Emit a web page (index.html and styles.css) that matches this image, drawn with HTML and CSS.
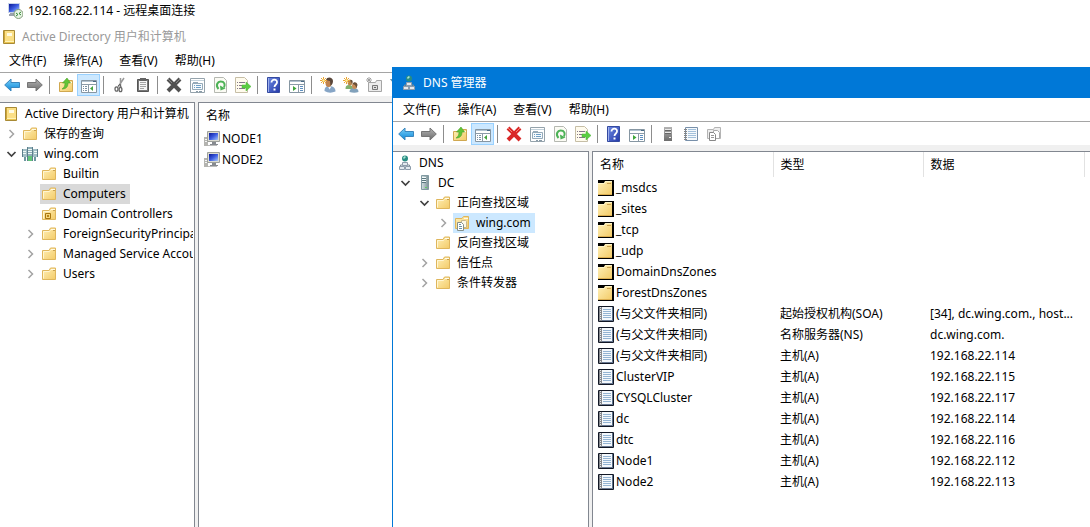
FILE: index.html
```html
<!DOCTYPE html>
<html lang="zh-CN">
<head>
<meta charset="utf-8">
<title>192.168.22.114 - 远程桌面连接</title>
<link rel="stylesheet" href="styles.css">
</head>
<body>
<svg class="defs" aria-hidden="true">
  <defs>
    <linearGradient id="g-folder" x1="0" y1="0" x2="1" y2="1"><stop offset="0" stop-color="#fff0b8"/><stop offset="1" stop-color="#f3cb68"/></linearGradient>
    <linearGradient id="g-blue" x1="0" y1="0" x2="0" y2="1"><stop offset="0" stop-color="#7cd0f8"/><stop offset="1" stop-color="#0a86d8"/></linearGradient>
    <linearGradient id="g-gray" x1="0" y1="0" x2="0" y2="1"><stop offset="0" stop-color="#b4b4b4"/><stop offset="1" stop-color="#6c6c6c"/></linearGradient>
    <linearGradient id="g-help" x1="0" y1="0" x2="1" y2="1"><stop offset="0" stop-color="#6f8ce4"/><stop offset="1" stop-color="#2438a8"/></linearGradient>
    <linearGradient id="g-screen" x1="0" y1="0" x2="1" y2="1"><stop offset="0" stop-color="#0a1896"/><stop offset=".5" stop-color="#3c5ce0"/><stop offset="1" stop-color="#a8c8fa"/></linearGradient>
    <linearGradient id="g-server" x1="0" y1="0" x2="1" y2="0"><stop offset="0" stop-color="#d5e2e4"/><stop offset="1" stop-color="#7b9096"/></linearGradient>
  </defs>
  <symbol id="i-folder" viewBox="0 0 16 16"><path d="M1.500 4.500h6.500l1.500-2.500h5v11.500h-13z" fill="url(#g-folder)" stroke="#dfb65c"/><path d="M10 3.500h4" stroke="#fffbe8"/><path d="M12 4.500h2" stroke="#c9a050"/><path d="M2.500 12.500v-7H8.500l1-1" fill="none" stroke="#fff6d2"/></symbol>
  <symbol id="i-folder-ou" viewBox="0 0 16 16"><use href="#i-folder"/><path d="M4.500 7.500h5v5h-5z" fill="#f6d67c" stroke="#a87610"/><path d="M6 9h2v2H6z" fill="#b98516"/></symbol>
  <symbol id="i-zone" viewBox="0 0 16 16"><path d="M1.500 3.500h6.500l1.500-2h5v12h-13z" fill="url(#g-folder)" stroke="#dfb65c"/><path d="M10 3.500h4" stroke="#fffbe8"/><path d="M7.500 5.500h4l1 1v6h-5z" fill="#fdf8e6" stroke="#c9b88c"/><path d="M3.500 7.500h4l2 2v6h-6z" fill="#fff" stroke="#84908c"/><path d="M5 9.500h2m-2 2h3m-3 2h3" stroke="#6d94a8"/></symbol>
  <symbol id="i-folder-sel" viewBox="0 0 16 16"><path d="M0 0h16v16H0z" fill="#000"/><path d="M0 3h6l1-2h7v13.500H0z" fill="url(#g-folder)"/><path d="M0 3.500h6.500l1-2H14" fill="none" stroke="#fff5c8"/><path d="M9 3.500h4" stroke="#c9a050"/><path d="M0 14.500h14" stroke="#dcae50"/></symbol>
  <symbol id="i-record" viewBox="0 0 16 16"><path d="M.5.500h15v15H.5z" fill="#f4f8fc" stroke="#111725"/><path d="M1 1h3v14H1z" fill="#84878c"/><path d="M2.500 1v14" stroke="#e7e9ed" stroke-dasharray="1 1"/><path d="M5 3.500h8m-8 2h8m-8 2h8m-8 2h8m-8 2h8" stroke="#94b4d3"/><path d="M14.500 1v14" stroke="#5c718c"/><path d="M4 14.500h11" stroke="#687892"/></symbol>
  <symbol id="i-book" viewBox="0 0 16 16"><path d="M2.500 1.500h11v13h-11z" fill="#eac451" stroke="#a88a35"/><path d="M4 2h9v10H4z" fill="#fbdf85"/><path d="M6 4h5v3H6z" fill="#fffbe4"/><path d="M3 12.500h10" stroke="#fff3b6"/><path d="M3.500 2v11" stroke="#cda539"/></symbol>
  <symbol id="i-domain" viewBox="0 0 16 16"><path d="M5 1h6v14H5z" fill="#8faeb8"/><path d="M0 3h5v8H0zM11 3h5v8h-5z" fill="#a2bec5"/><path d="M6 3.500h4m-4 2h4m-4 2h4M1 5.500h3m-3 2h3M12 5.500h3m-3 2h3" stroke="#eef9f6"/><path d="M5.500 1v14m5-14v14M.5 3v8m15-8v8" stroke="#5c7f8c"/><path d="M6 10h4v5H6z" fill="#62c479"/><path d="M2 11h2v4H2zM12 11h2v4h-2z" fill="#6d98a0"/></symbol>
  <symbol id="i-pc" viewBox="0 0 16 16"><path d="M0 6h4v9H0z" fill="#b4b4b0"/><path d="M1 8.500h2m-2 2h2" stroke="#f6f6f6"/><path d="M3.500.500h12v10h-12z" fill="#dcdcd2" stroke="#9ea19c"/><path d="M5 2h9v7H5z" fill="url(#g-screen)"/><path d="M8 11h4v2h2v1H6v-1h2z" fill="#878b90"/><path d="M4 14.500h9" stroke="#bcbdbc"/></symbol>
  <symbol id="i-rdp" viewBox="0 0 16 16"><path d="M1 0h12v10H1z" fill="#c9d4ea"/><path d="M2 1h10v8H2z" fill="url(#g-screen)"/><path d="M3 10h5v1H3zM2 11h6v2H2z" fill="#9ba3ae"/><circle cx="11.500" cy="11" r="4.500" fill="#e7f3e4" stroke="#809c79"/><path d="m9 10 2 1.500L9 13m5-4-2 1.500 2 1.500" fill="none" stroke="#338a35"/></symbol>
  <symbol id="i-dns" viewBox="0 0 16 16"><circle cx="8" cy="3.500" r="3" fill="#288d83"/><path d="M6 3c1-2 2-2 3-1L7 4z" fill="#a8e3d2"/><path d="M8 7v3M3.500 12v-2h9v2" fill="none" stroke="#7c8b94"/><path d="M5.500 7.500h5v3h-5zM2.500 11.500h5v3h-5zM8.500 11.500h5v3h-5z" fill="#e2e9ee" stroke="#8d9cab"/></symbol>
  <symbol id="i-server" viewBox="0 0 16 16"><path d="M5.500.500h7v14h-7z" fill="url(#g-server)" stroke="#819aa2"/><path d="M6 3.500h4m-4 2h4m-4 2h4" stroke="#5a767e"/><path d="M6 2.500h4m-4 2h4m-4 2h4" stroke="#f2fafa"/><path d="M9 12h2v1H9z" fill="#61d063"/></symbol>
  <symbol id="i-server-gray" viewBox="0 0 16 16"><path d="M4 1h8v14H4z" fill="url(#g-gray)"/><path d="M5 3.500h6m-6 3h6" stroke="#e9e9e9"/><path d="M5 4.500h6m-6 3h6" stroke="#666"/><path d="M9 11h2v1H9z" fill="#eee"/></symbol>
  <symbol id="i-back" viewBox="0 0 16 16"><path d="M.7 8 7 2v3.500h8.500v5H7V14z" fill="url(#g-blue)" stroke="#3a86bd"/></symbol>
  <symbol id="i-forward" viewBox="0 0 16 16"><path d="M15.300 8 9 2v3.500H.5v5H9V14z" fill="url(#g-gray)" stroke="#757575"/></symbol>
  <symbol id="i-up" viewBox="0 0 16 16"><path d="M1.500 5.500h6l1.500-2h5.500v11h-13z" fill="url(#g-folder)" stroke="#d0a850"/><path d="M10 5.500h4" stroke="#fffbe8"/><path d="M4 12c2-1 3-3 3-6H4.500L9 1l3.500 5H10c0 4-2 6-6 6z" fill="#62c436" stroke="#4ba32b" stroke-width=".6"/></symbol>
  <symbol id="i-tree" viewBox="0 0 16 16"><path d="M.5 3.500h15v12H.5z" fill="#fff" stroke="#8696a2"/><path d="M1 4.500h14" stroke="#b2c3d1"/><path d="M12 4.500h3" stroke="#486a86"/><path d="M1 7.500h14M7.500 8v7" stroke="#8b9ba8"/><path d="M2 9.500h1m1 0h2m-4 2h1m1 0h2m-4 2h1m1 0h2" stroke="#7b91a4"/><path d="m9 11.500 3-2.500v5z" fill="#44a340"/></symbol>
  <symbol id="i-pane" viewBox="0 0 16 16"><path d="M.5 3.500h15v12H.5z" fill="#fff" stroke="#8696a2"/><path d="M1 4.500h14" stroke="#b2c3d1"/><path d="M12 4.500h3" stroke="#486a86"/><path d="M1 7.500h14M9.500 8v7" stroke="#8b9ba8"/><path d="M11 9.500h3m-3 2h3m-3 2h3" stroke="#5d8fc0"/><path d="M4 9l3.500 2.500L4 14z" fill="#3da53a"/></symbol>
  <symbol id="i-cut" viewBox="0 0 16 16"><path d="M12 1 6 10M8.500 1v9" fill="none" stroke="#999" stroke-width="1.500"/><path d="m6 9 2-2 1 3" fill="none" stroke="#666"/><ellipse cx="4.500" cy="12" rx="1.500" ry="2.200" fill="none" stroke="#666" stroke-width="1.300"/><ellipse cx="8.500" cy="12.500" rx="1.400" ry="2.200" fill="none" stroke="#666" stroke-width="1.300"/></symbol>
  <symbol id="i-clip" viewBox="0 0 16 16"><path d="M2.500 2.500h11v12h-11z" fill="#777" stroke="#555"/><path d="M4 4h8v9H4z" fill="#f7f7f7"/><path d="M5 1h6v3H5z" fill="#646464"/><path d="M5 5.500h6m-6 2h6m-6 2h6m-6 2h4" stroke="#a5a5a5"/></symbol>
  <symbol id="i-x-gray" viewBox="0 0 16 16"><path d="m2 2 12 12M14 2 2 14" stroke="#515151" stroke-width="4"/><path d="m2 2 4 4m8-4-4 4" stroke="#888"/></symbol>
  <symbol id="i-x-red" viewBox="0 0 16 16"><path d="m2 2 12 12M14 2 2 14" stroke="#d92727" stroke-width="4"/><path d="m2 2 4 4m8-4-4 4" stroke="#f68173"/></symbol>
  <symbol id="i-props" viewBox="0 0 16 16"><path d="M1.500 1.500h14v14h-14z" fill="#fff" stroke="#95a3ac"/><path d="M2 3.500h13" stroke="#c4d3dc"/><path d="M3.500 6.500h10v6h-10zM4 5.500h5" fill="#f6fafc" stroke="#95aab9"/><path d="M5 8.500h1m1 0h5m-7 2h1m1 0h5" stroke="#6d9fc6"/><path d="M7 14.500h2m1 0h3" stroke="#899ba8"/></symbol>
  <symbol id="i-refresh" viewBox="0 0 16 16"><path d="M2.500.500h9l3 3v12h-12z" fill="#fbfbf4" stroke="#b5b8b1"/><path d="M6.500 12C3 8 6 4.500 8.500 4.500c4 0 5 3 3.500 6" fill="none" stroke="#4db257" stroke-width="2"/><path d="m8 8.500 5.500 3-5 2z" fill="#4db257"/></symbol>
  <symbol id="i-export" viewBox="0 0 16 16"><path d="M.5.500h9l3 3v12H.5z" fill="#fffbed" stroke="#c6bea6"/><path d="M2 5.500h1m1 0h6m-8 3h1m1 0h4m-6 3h1m1 0h6" stroke="#84788a"/><path d="M7 8h4V5l5 4.500-5 4.500v-3H7z" fill="#5bce42" stroke="#48b436" stroke-width=".5"/></symbol>
  <symbol id="i-help" viewBox="0 0 16 16"><path d="M1.500.500h12v15h-12z" fill="url(#g-help)" stroke="#344aa0"/><path d="M2.500 1v14" stroke="#9eb0ed"/><path d="M5.500 5.500c0-4 6-3.500 5.500 0C11 7.500 8.500 7.500 8.500 10" fill="none" stroke="#fff" stroke-width="1.800"/><path d="M7.500 11.500h2v2h-2z" fill="#fff"/></symbol>
  <symbol id="i-spark" viewBox="0 0 16 16"><path d="M3.500 0v7M0 3.500h7M1 1l5 5M6 1 1 6" stroke="#eba535"/><circle cx="3.500" cy="3.500" r="1.200" fill="#fff3a0"/></symbol>
  <symbol id="i-user" viewBox="0 0 16 16"><path d="M4.500 14c0-4 2-5 5-5s6 1.500 6 5.500q-6 2.500-11-.5" fill="#86a5c6"/><path d="m8 9.500 1.500 3 2-3z" fill="#f4f7fb"/><ellipse cx="8.500" cy="6" rx="3" ry="4" fill="#c0834f"/><path d="M6 3C7-1 13 0 13 4c0 2-1 4-2.500 5L10 4z" fill="#59463a"/><use href="#i-spark"/></symbol>
  <symbol id="i-users" viewBox="0 0 16 16"><path d="M2.500 12c0-3 1-4 3.500-4s4 1 4 4z" fill="#81b06e"/><ellipse cx="7" cy="5.500" rx="2.300" ry="3" fill="#b6844e"/><path d="M7 3.500c3-2 3 2 2 3z" fill="#675039"/><path d="M6.500 15c0-3 2-4 4.500-4s4.500 1 4.500 4q-4 1.500-9 0" fill="#81a1bb"/><ellipse cx="11.500" cy="9" rx="2.500" ry="3" fill="#c78d57"/><path d="M9.500 7c1-3 5-2 5 1l-1 3-1.500-3z" fill="#6b5038"/><use href="#i-spark"/></symbol>
  <symbol id="i-newou" viewBox="0 0 16 16"><path d="M2.500 5.500h7l1-2h5v11h-13z" fill="#ececec" stroke="#a5a5a5"/><path d="M6.500 8.500h5v4h-5z" fill="#ddd" stroke="#777"/><path d="M8 10h2v1H8z" fill="#666"/><path d="M3 0v6M0 3h6M1 1l4 4M5 1 1 5" stroke="#a0a0a0"/></symbol>
  <symbol id="i-filter" viewBox="0 0 16 16"><path d="M1.500 2.500h13L9.500 8v6l-3-2V8z" fill="#a8c8dc" stroke="#7595aa"/></symbol>
  <symbol id="i-note" viewBox="0 0 16 16"><path d="M2.500 1.500h12v13h-12z" fill="#f5f9fc" stroke="#7890aa"/><path d="M1 3.500h3m-3 2h3m-3 2h3m-3 2h3m-3 2h3m-3 2h3" stroke="#858585"/><path d="M5 3.500h8m-8 2h8m-8 2h8m-8 2h8m-8 2h8" stroke="#a2c0db"/></symbol>
  <symbol id="i-docs" viewBox="0 0 16 16"><path d="M1.500 3.500h6l1-2h6v11h-13z" fill="#ededed" stroke="#b4b4b4"/><path d="M7.500 4.500h4l2 2v6h-6z" fill="#fff" stroke="#aaa"/><path d="M3.500 6.500h4l2 2v6h-6z" fill="#fff" stroke="#888"/><path d="M5 9.500h3m-3 2h3" stroke="#999"/></symbol>
  <symbol id="i-open" viewBox="0 0 16 16"><path d="m4 6 4 4 4-4" fill="none" stroke="#404040" stroke-width="1.700"/></symbol>
  <symbol id="i-closed" viewBox="0 0 16 16"><path d="m6 4 4 4-4 4" fill="none" stroke="#a3a3a3" stroke-width="1.500"/></symbol>
</svg>

<header class="remote-title"><svg class="icon"><use href="#i-rdp"/></svg><span>192.168.22.114 - 远程桌面连接</span></header>

<main class="desktop">
  <section class="window ad">
    <header class="title"><svg class="icon"><use href="#i-book"/></svg><span>Active Directory 用户和计算机</span></header>
    <nav class="menu"><button>文件(F)</button><button>操作(A)</button><button>查看(V)</button><button>帮助(H)</button></nav>
    <div class="toolbar">
      <button aria-label="后退"><svg class="icon"><use href="#i-back"/></svg></button>
      <button aria-label="前进"><svg class="icon"><use href="#i-forward"/></svg></button>
      <i class="sep"></i>
      <button aria-label="向上"><svg class="icon"><use href="#i-up"/></svg></button>
      <button class="on" aria-label="控制台树"><svg class="icon"><use href="#i-tree"/></svg></button>
      <i class="sep"></i>
      <button aria-label="剪切"><svg class="icon"><use href="#i-cut"/></svg></button>
      <button aria-label="粘贴"><svg class="icon"><use href="#i-clip"/></svg></button>
      <i class="sep"></i>
      <button aria-label="删除"><svg class="icon"><use href="#i-x-gray"/></svg></button>
      <button aria-label="属性"><svg class="icon"><use href="#i-props"/></svg></button>
      <button aria-label="刷新"><svg class="icon"><use href="#i-refresh"/></svg></button>
      <button aria-label="导出"><svg class="icon"><use href="#i-export"/></svg></button>
      <i class="sep"></i>
      <button aria-label="帮助"><svg class="icon"><use href="#i-help"/></svg></button>
      <button aria-label="操作窗格"><svg class="icon"><use href="#i-pane"/></svg></button>
      <i class="sep"></i>
      <button aria-label="新建用户"><svg class="icon"><use href="#i-user"/></svg></button>
      <button aria-label="新建组"><svg class="icon"><use href="#i-users"/></svg></button>
      <button aria-label="新建组织单位"><svg class="icon"><use href="#i-newou"/></svg></button>
      <button aria-label="筛选"><svg class="icon"><use href="#i-filter"/></svg></button>
    </div>
    <div class="panes">
      <ul class="tree">
        <li class="l0"><span class="node"><svg class="icon"><use href="#i-book"/></svg>Active Directory 用户和计算机</span></li>
        <li class="l1"><svg class="icon arrow"><use href="#i-closed"/></svg><span class="node"><svg class="icon"><use href="#i-folder"/></svg>保存的查询</span></li>
        <li class="l1"><svg class="icon arrow"><use href="#i-open"/></svg><span class="node"><svg class="icon"><use href="#i-domain"/></svg>wing.com</span></li>
        <li class="l2"><span class="arrow"></span><span class="node"><svg class="icon"><use href="#i-folder"/></svg>Builtin</span></li>
        <li class="l2"><span class="arrow"></span><span class="node idle"><svg class="icon"><use href="#i-folder"/></svg>Computers</span></li>
        <li class="l2"><span class="arrow"></span><span class="node"><svg class="icon"><use href="#i-folder-ou"/></svg>Domain Controllers</span></li>
        <li class="l2"><svg class="icon arrow"><use href="#i-closed"/></svg><span class="node"><svg class="icon"><use href="#i-folder"/></svg>ForeignSecurityPrincipals</span></li>
        <li class="l2"><svg class="icon arrow"><use href="#i-closed"/></svg><span class="node"><svg class="icon"><use href="#i-folder"/></svg>Managed Service Accounts</span></li>
        <li class="l2"><svg class="icon arrow"><use href="#i-closed"/></svg><span class="node"><svg class="icon"><use href="#i-folder"/></svg>Users</span></li>
      </ul>
      <div class="list">
        <table>
          <thead><tr><th>名称</th></tr></thead>
          <tbody>
            <tr><td><span class="item"><svg class="icon"><use href="#i-pc"/></svg>NODE1</span></td></tr>
            <tr><td><span class="item"><svg class="icon"><use href="#i-pc"/></svg>NODE2</span></td></tr>
          </tbody>
        </table>
      </div>
    </div>
  </section>

  <section class="window dns">
    <header class="title"><svg class="icon"><use href="#i-dns"/></svg><span>DNS 管理器</span></header>
    <nav class="menu"><button>文件(F)</button><button>操作(A)</button><button>查看(V)</button><button>帮助(H)</button></nav>
    <div class="toolbar">
      <button aria-label="后退"><svg class="icon"><use href="#i-back"/></svg></button>
      <button aria-label="前进"><svg class="icon"><use href="#i-forward"/></svg></button>
      <i class="sep"></i>
      <button aria-label="向上"><svg class="icon"><use href="#i-up"/></svg></button>
      <button class="on" aria-label="控制台树"><svg class="icon"><use href="#i-tree"/></svg></button>
      <i class="sep"></i>
      <button aria-label="删除"><svg class="icon"><use href="#i-x-red"/></svg></button>
      <button aria-label="属性"><svg class="icon"><use href="#i-props"/></svg></button>
      <button aria-label="刷新"><svg class="icon"><use href="#i-refresh"/></svg></button>
      <button aria-label="导出"><svg class="icon"><use href="#i-export"/></svg></button>
      <i class="sep"></i>
      <button aria-label="帮助"><svg class="icon"><use href="#i-help"/></svg></button>
      <button aria-label="操作窗格"><svg class="icon"><use href="#i-pane"/></svg></button>
      <i class="sep"></i>
      <button aria-label="新建服务器"><svg class="icon"><use href="#i-server-gray"/></svg></button>
      <button aria-label="新建记录"><svg class="icon"><use href="#i-note"/></svg></button>
      <button aria-label="新建区域"><svg class="icon"><use href="#i-docs"/></svg></button>
    </div>
    <div class="panes">
      <ul class="tree">
        <li class="l0"><span class="node"><svg class="icon"><use href="#i-dns"/></svg>DNS</span></li>
        <li class="l1"><svg class="icon arrow"><use href="#i-open"/></svg><span class="node"><svg class="icon"><use href="#i-server"/></svg>DC</span></li>
        <li class="l2"><svg class="icon arrow"><use href="#i-open"/></svg><span class="node"><svg class="icon"><use href="#i-folder"/></svg>正向查找区域</span></li>
        <li class="l3"><svg class="icon arrow"><use href="#i-closed"/></svg><span class="node active"><svg class="icon"><use href="#i-zone"/></svg>wing.com</span></li>
        <li class="l2"><span class="arrow"></span><span class="node"><svg class="icon"><use href="#i-folder"/></svg>反向查找区域</span></li>
        <li class="l2"><svg class="icon arrow"><use href="#i-closed"/></svg><span class="node"><svg class="icon"><use href="#i-folder"/></svg>信任点</span></li>
        <li class="l2"><svg class="icon arrow"><use href="#i-closed"/></svg><span class="node"><svg class="icon"><use href="#i-folder"/></svg>条件转发器</span></li>
      </ul>
      <div class="list">
        <table>
          <colgroup><col class="c-name"><col class="c-type"><col class="c-data"><col></colgroup>
          <thead><tr><th>名称</th><th>类型</th><th>数据</th><th></th></tr></thead>
          <tbody>
            <tr><td><span class="item"><svg class="icon"><use href="#i-folder-sel"/></svg>_msdcs</span></td><td></td><td></td></tr>
            <tr><td><span class="item"><svg class="icon"><use href="#i-folder-sel"/></svg>_sites</span></td><td></td><td></td></tr>
            <tr><td><span class="item"><svg class="icon"><use href="#i-folder-sel"/></svg>_tcp</span></td><td></td><td></td></tr>
            <tr><td><span class="item"><svg class="icon"><use href="#i-folder-sel"/></svg>_udp</span></td><td></td><td></td></tr>
            <tr><td><span class="item"><svg class="icon"><use href="#i-folder-sel"/></svg>DomainDnsZones</span></td><td></td><td></td></tr>
            <tr><td><span class="item"><svg class="icon"><use href="#i-folder-sel"/></svg>ForestDnsZones</span></td><td></td><td></td></tr>
            <tr><td><span class="item"><svg class="icon"><use href="#i-record"/></svg>(与父文件夹相同)</span></td><td>起始授权机构(SOA)</td><td>[34], dc.wing.com., host...</td></tr>
            <tr><td><span class="item"><svg class="icon"><use href="#i-record"/></svg>(与父文件夹相同)</span></td><td>名称服务器(NS)</td><td>dc.wing.com.</td></tr>
            <tr><td><span class="item"><svg class="icon"><use href="#i-record"/></svg>(与父文件夹相同)</span></td><td>主机(A)</td><td>192.168.22.114</td></tr>
            <tr><td><span class="item"><svg class="icon"><use href="#i-record"/></svg>ClusterVIP</span></td><td>主机(A)</td><td>192.168.22.115</td></tr>
            <tr><td><span class="item"><svg class="icon"><use href="#i-record"/></svg>CYSQLCluster</span></td><td>主机(A)</td><td>192.168.22.117</td></tr>
            <tr><td><span class="item"><svg class="icon"><use href="#i-record"/></svg>dc</span></td><td>主机(A)</td><td>192.168.22.114</td></tr>
            <tr><td><span class="item"><svg class="icon"><use href="#i-record"/></svg>dtc</span></td><td>主机(A)</td><td>192.168.22.116</td></tr>
            <tr><td><span class="item"><svg class="icon"><use href="#i-record"/></svg>Node1</span></td><td>主机(A)</td><td>192.168.22.112</td></tr>
            <tr><td><span class="item"><svg class="icon"><use href="#i-record"/></svg>Node2</span></td><td>主机(A)</td><td>192.168.22.113</td></tr>
          </tbody>
        </table>
      </div>
    </div>
  </section>
</main>
</body>
</html>
```

FILE: styles.css
```css
* { box-sizing: border-box; }

body {
  margin: 0;
  height: 100vh;
  display: flex;
  flex-direction: column;
  overflow: hidden;
  background: #fff;
  color: #000;
  font: 12px/20px "Noto Sans", "Noto Sans CJK SC", sans-serif;
  white-space: nowrap;
}

button {
  margin: 0;
  padding: 0;
  border: 0;
  background: none;
  color: inherit;
  font: inherit;
}

.defs { position: absolute; width: 0; height: 0; }
.icon { display: block; flex: none; width: 16px; height: 16px; }

.remote-title {
  display: flex;
  align-items: center;
  gap: 5px;
  height: 22px;
  padding-left: 7px;
}

.desktop {
  position: relative;
  flex: 1;
  min-height: 0;
}

.window {
  display: flex;
  flex-direction: column;
  background: #fff;
}

.ad { height: 100%; }

/* The DNS console floats above the directory console. */
.dns {
  position: absolute;
  top: 45px;
  right: 0;
  bottom: 0;
  left: 392px;
  border-left: 1px solid #0078d7;
}

.title {
  display: flex;
  align-items: center;
  gap: 5px;
  height: 30px;
  padding-left: 1px;
}

.ad .title { color: #999; }

.dns .title {
  height: 31px;
  gap: 6px;
  padding-left: 8px;
  background: #0078d7;
  color: #fff;
}

.menu {
  display: flex;
  align-items: center;
  gap: 17px;
  height: 20px;
  padding: 0 0 2px 9px;
}

.dns .menu { height: 23px; padding: 0 0 0 10px; }

.toolbar {
  display: flex;
  height: 24px;
  padding-top: 1px;
  border-top: 1px solid #a5a5a5;
}

.dns .toolbar { padding-left: 1px; }

.toolbar button {
  display: flex;
  align-items: center;
  justify-content: center;
  flex: none;
  width: 23px;
  height: 22px;
}

.toolbar .on { background: #cce8ff; border: 1px solid #99d1ff; }

.sep {
  flex: none;
  width: 8px;
  height: 18px;
  margin-top: 2px;
  padding-left: 3px;
}

.sep::before {
  content: "";
  display: block;
  width: 1px;
  height: 100%;
  background: #8d8d8d;
}

.panes {
  display: grid;
  grid-template-columns: 195px 1fr;
  column-gap: 3px;
  flex: 1;
  min-height: 0;
  padding-top: 6px;
  background: #f0f0f0;
}

.dns .panes { grid-template-columns: 196px 1fr; }

.tree {
  margin: 0;
  padding: 1px 1px 0 2px;
  list-style: none;
  overflow: hidden;
  background: #fff;
  border-top: 1px solid #828790;
  border-right: 1px solid #828790;
}

.dns .tree { padding-left: 3px; }

.tree li { display: flex; align-items: center; height: 20px; overflow: hidden; }
.l2 { padding-left: 19px; }
.l3 { padding-left: 38px; }
.arrow { flex: none; width: 19px; }

.node {
  display: flex;
  align-items: center;
  gap: 6px;
  height: 20px;
  padding: 0 4px 0 1px;
}

.idle { background: #d9d9d9; }
.active { background: #cce8ff; }

.list {
  overflow: hidden;
  background: #fff;
  border-top: 1px solid #828790;
  border-left: 1px solid #828790;
}

table { width: 100%; border-collapse: collapse; table-layout: fixed; }
th, td { padding: 0; text-align: left; font-weight: normal; }
th { height: 25px; padding-left: 7px; }
td { height: 21px; padding-left: 7px; }
td:first-child { padding-left: 5px; }
.dns th:not(:last-child) { border-right: 1px solid #e2e2e2; }
.c-name { width: 180px; }
.c-type { width: 150px; }
.c-data { width: 161px; }
.item { display: flex; align-items: center; gap: 2px; }
```
